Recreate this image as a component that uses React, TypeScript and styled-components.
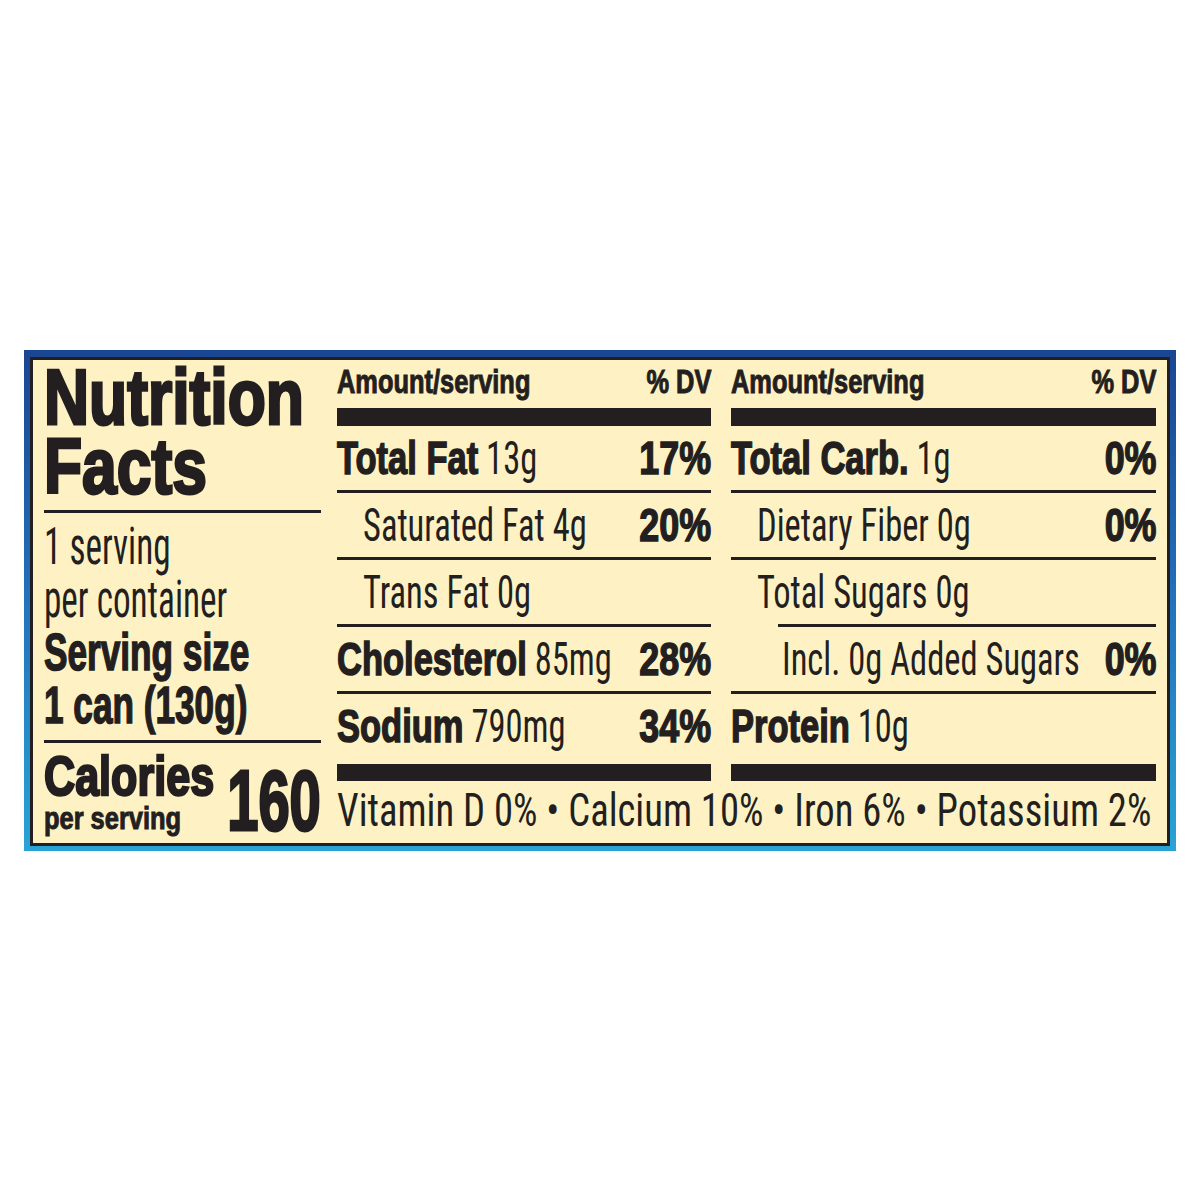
import React from 'react';
import styled, { createGlobalStyle } from 'styled-components';

// the label uses a very narrow face: text is drawn with stock fonts and squeezed sideways
const BODY_SX = 0.75;

const GlobalStyle = createGlobalStyle`
  body {
    margin: 0;
    background: #ffffff;
    font-family: "Roboto Condensed", "Liberation Sans Narrow", "Liberation Sans", sans-serif;
    color: #231f20;
  }
`;

const Page = styled.div`
  padding: 350px 24px 0 24px;
`;

const Frame = styled.div`
  padding: 7px 6px 5px 6px;
  background: linear-gradient(180deg, #1a4592 0%, #2272ba 50%, #29a3d6 100%);
`;

const Label = styled.div`
  border: 3px solid #231f20;
  background: #fef2c4;
  display: grid;
  grid-template-columns: 277px 374px 425px;
  column-gap: 16px;
  padding: 0 12px 0 11px;
  height: 483px;
`;

const Squeeze = styled.span<{ $sx?: number; $origin?: 'left' | 'right' }>`
  display: block;
  width: max-content;
  white-space: nowrap;
  transform: scaleX(${(p) => p.$sx || BODY_SX});
  transform-origin: ${(p) => p.$origin || 'left'} center;
`;

const Strong = styled.b<{ $stroke?: number }>`
  font-family: "Liberation Sans", Arial, sans-serif;
  font-weight: 700;
  -webkit-text-stroke: ${(p) => p.$stroke ?? 1.5}px #231f20;
`;

const Rule = styled.div<{ $weight?: number; $inset?: number; $gap?: number }>`
  height: ${(p) => p.$weight || 3}px;
  margin-left: ${(p) => p.$inset || 0}px;
  margin-top: ${(p) => p.$gap || 0}px;
  background: #231f20;
`;

// Left column
const Side = styled.div`
  display: flex;
  flex-direction: column;
`;

const Title = styled.h1`
  margin: 3px 0 0 0;
  font-size: 78px;
  line-height: 68px;
  font-weight: 700;
`;

const Serving = styled.div`
  margin: 7px 0 8px 0;
  font-size: 51px;
  line-height: 53px;
`;

const CaloriesRow = styled.div`
  margin-top: 8px;
  display: grid;
  grid-template-columns: minmax(0, 1fr) auto;
  align-items: end;
`;

const CaloriesLabel = styled.div`
  font-size: 56px;
  line-height: 50px;
`;

const PerServing = styled.div`
  font-size: 31px;
  line-height: 35px;
`;

const CaloriesValue = styled.div`
  font-size: 85px;
  line-height: 70px;
`;

// Right part
const Main = styled.div`
  grid-column: 2 / 4;
  display: grid;
  grid-template-columns: 374px 425px;
  column-gap: 20px;
  align-content: start;
`;

const Column = styled.div`
  display: flex;
  flex-direction: column;
`;

const Head = styled.div`
  height: 44px;
  padding-bottom: 4px;
  display: grid;
  grid-template-columns: minmax(0, 1fr) auto;
  font-size: 33px;
  line-height: 44px;
`;

const Row = styled.div<{ $indent?: number }>`
  height: 64px;
  display: grid;
  grid-template-columns: minmax(0, 1fr) auto;
  padding-left: ${(p) => p.$indent || 0}px;
  font-size: 46px;
  line-height: 64px;
`;

const Vitamins = styled.div`
  grid-column: 1 / 3;
  font-size: 46px;
  line-height: 59px;
`;

type Nutrient = {
  bold?: string;
  text?: string;
  dv?: string;
  indent?: number;
  rule?: number | null;
};

const fatSide: Nutrient[] = [
  { bold: 'Total Fat', text: '13g', dv: '17%' },
  { text: 'Saturated Fat 4g', dv: '20%', indent: 26 },
  { text: 'Trans Fat 0g', indent: 26 },
  { bold: 'Cholesterol', text: '85mg', dv: '28%' },
  { bold: 'Sodium', text: '790mg', dv: '34%', rule: null },
];

const carbSide: Nutrient[] = [
  { bold: 'Total Carb.', text: '1g', dv: '0%' },
  { text: 'Dietary Fiber 0g', dv: '0%', indent: 26 },
  { text: 'Total Sugars 0g', indent: 26, rule: 47 },
  { text: 'Incl. 0g Added Sugars', dv: '0%', indent: 51 },
  { bold: 'Protein', text: '10g', rule: null },
];

const NutrientColumn = ({ items }: { items: Nutrient[] }) => (
  <Column>
    <Head>
      <Squeeze $sx={0.77}>
        <Strong $stroke={1}>Amount/serving</Strong>
      </Squeeze>
      <Squeeze $sx={0.77} $origin="right">
        <Strong $stroke={1}>% DV</Strong>
      </Squeeze>
    </Head>
    <Rule $weight={18} />
    {items.map((n) => (
      <React.Fragment key={(n.bold || '') + (n.text || '')}>
        <Row $indent={n.indent}>
          <Squeeze>
            {n.bold && <Strong>{n.bold}</Strong>}
            {n.bold && n.text ? ' ' : ''}
            {n.text}
          </Squeeze>
          {n.dv ? (
            <Squeeze $sx={0.78} $origin="right">
              <Strong>{n.dv}</Strong>
            </Squeeze>
          ) : (
            <span />
          )}
        </Row>
        {n.rule !== null && <Rule $inset={n.rule || 0} />}
      </React.Fragment>
    ))}
    <Rule $weight={17} $gap={6} />
  </Column>
);

const App = () => {
  return (
    <Page>
      <GlobalStyle />
      <Frame>
        <Label>
          <Side>
            <Title>
              <Squeeze $sx={0.8}>
                <Strong $stroke={3}>Nutrition</Strong>
              </Squeeze>
              <Squeeze $sx={0.8}>
                <Strong $stroke={3}>Facts</Strong>
              </Squeeze>
            </Title>
            <Rule $gap={9} />
            <Serving>
              <Squeeze $sx={0.69}>1 serving</Squeeze>
              <Squeeze $sx={0.69}>per container</Squeeze>
              <Squeeze $sx={0.69}>
                <Strong>Serving size</Strong>
              </Squeeze>
              <Squeeze $sx={0.69}>
                <Strong>1 can (130g)</Strong>
              </Squeeze>
            </Serving>
            <Rule />
            <CaloriesRow>
              <div>
                <CaloriesLabel>
                  <Squeeze $sx={0.77}>
                    <Strong $stroke={2.5}>Calories</Strong>
                  </Squeeze>
                </CaloriesLabel>
                <PerServing>
                  <Squeeze $sx={0.82}>
                    <Strong $stroke={1}>per serving</Strong>
                  </Squeeze>
                </PerServing>
              </div>
              <CaloriesValue>
                <Squeeze $sx={0.66} $origin="right">
                  <Strong $stroke={3}>160</Strong>
                </Squeeze>
              </CaloriesValue>
            </CaloriesRow>
          </Side>

          <Main>
            <NutrientColumn items={fatSide} />
            <NutrientColumn items={carbSide} />
            <Vitamins>
              <Squeeze $sx={0.84}>
                Vitamin D 0% • Calcium 10% • Iron 6% • Potassium 2%
              </Squeeze>
            </Vitamins>
          </Main>
        </Label>
      </Frame>
    </Page>
  );
};

export default App;
